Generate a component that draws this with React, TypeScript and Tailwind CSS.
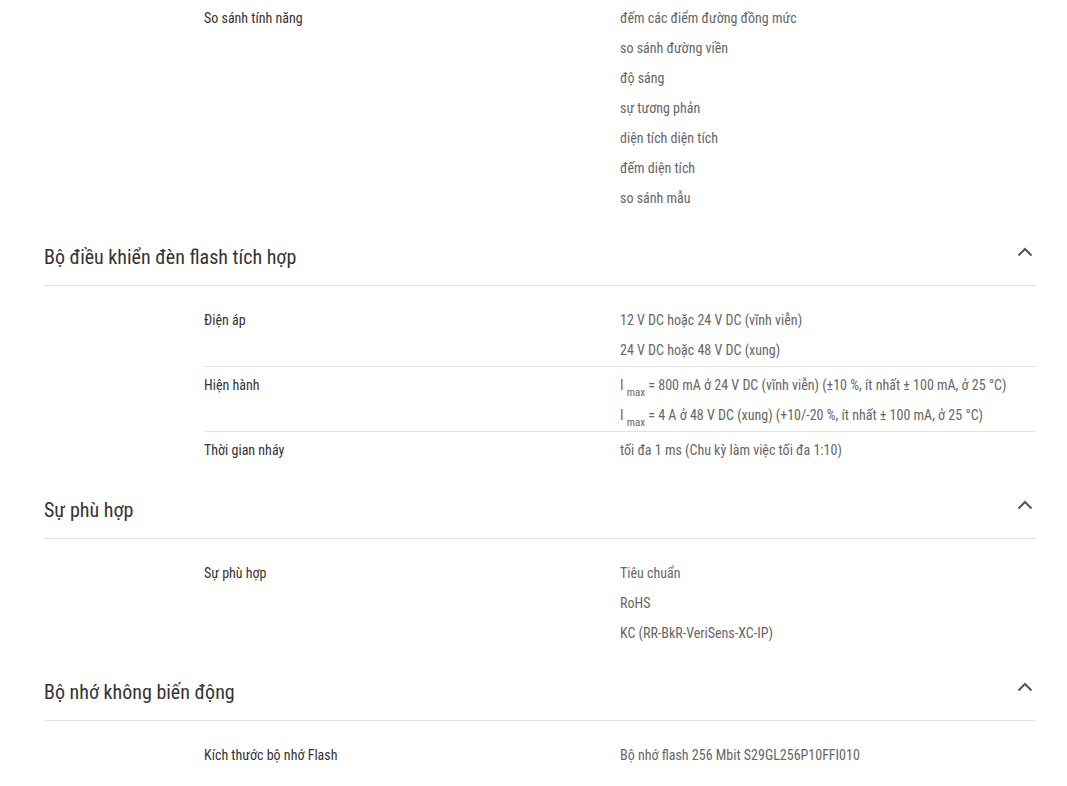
import React from "react";

type Row = { label: string; values: React.ReactNode[] };
type Section = { title?: string; rows: Row[] };

const Imax = ({ rest }: { rest: string }) => (
  <>
    I <sub className="text-[11px] align-[-3px]">max</sub> {rest}
  </>
);

const sections: Section[] = [
  {
    rows: [
      {
        label: "So sánh tính năng",
        values: [
          "đếm các điểm đường đồng mức",
          "so sánh đường viền",
          "độ sáng",
          "sự tương phản",
          "diện tích diện tích",
          "đếm diện tích",
          "so sánh mẫu",
        ],
      },
    ],
  },
  {
    title: "Bộ điều khiển đèn flash tích hợp",
    rows: [
      {
        label: "Điện áp",
        values: ["12 V DC hoặc 24 V DC (vĩnh viễn)", "24 V DC hoặc 48 V DC (xung)"],
      },
      {
        label: "Hiện hành",
        values: [
          <Imax rest="= 800 mA ở 24 V DC (vĩnh viễn) (±10 %, ít nhất ± 100 mA, ở 25 °C)" />,
          <Imax rest="= 4 A ở 48 V DC (xung) (+10/-20 %, ít nhất ± 100 mA, ở 25 °C)" />,
        ],
      },
      {
        label: "Thời gian nháy",
        values: ["tối đa 1 ms (Chu kỳ làm việc tối đa 1:10)"],
      },
    ],
  },
  {
    title: "Sự phù hợp",
    rows: [
      {
        label: "Sự phù hợp",
        values: ["Tiêu chuẩn", "RoHS", "KC (RR-BkR-VeriSens-XC-IP)"],
      },
    ],
  },
  {
    title: "Bộ nhớ không biến động",
    rows: [
      {
        label: "Kích thước bộ nhớ Flash",
        values: ["Bộ nhớ flash 256 Mbit S29GL256P10FFI010"],
      },
    ],
  },
];

function Chevron() {
  return (
    <svg width="16" height="10" viewBox="0 0 16 10" className="mt-[-10px] mr-[3px]">
      <path d="M1.5 8.5 L8 2 L14.5 8.5" fill="none" stroke="#555" strokeWidth="2" />
    </svg>
  );
}

export default function App() {
  return (
    <div
      className="w-[1067px] h-[786px] overflow-hidden bg-white px-[44px] pr-[31px]"
      style={{ fontFamily: '"Roboto Condensed", "Liberation Sans Narrow", Roboto, sans-serif' }}
    >
      {sections.map((s, i) => (
        <div key={i}>
          {s.title && (
            <div className="flex items-center justify-between border-b border-[#e3e3e3] pt-[29px] pb-[14px]">
              <h2 className="text-[20px] leading-[28px] text-[#333]">{s.title}</h2>
              <Chevron />
            </div>
          )}
          <div className={(s.title ? "pt-[16px] " : "") + (s.rows.length > 1 ? "pb-[1px]" : "")}>
            {s.rows.map((r, j) => (
              <div
                key={j}
                className={
                  "ml-[160px] flex pt-[3px] pb-[1px] text-[14px] " +
                  (j > 0 ? "border-t border-[#e3e3e3]" : "")
                }
              >
                <div className="w-[416px] shrink-0 leading-[30px] text-[#333]">{r.label}</div>
                <div className="flex flex-col text-[#666]">
                  {r.values.map((v, k) => (
                    <p key={k} className="h-[30px] leading-[30px]">
                      {v}
                    </p>
                  ))}
                </div>
              </div>
            ))}
          </div>
        </div>
      ))}
    </div>
  );
}
